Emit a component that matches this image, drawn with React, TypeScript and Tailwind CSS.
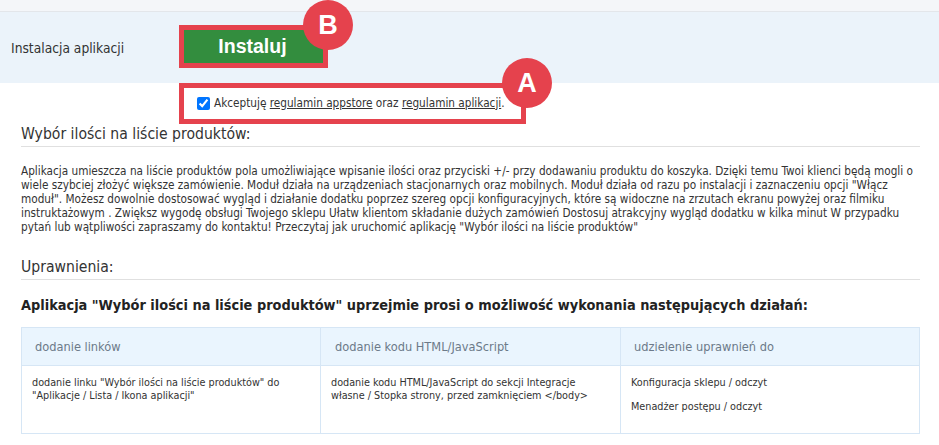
import React from "react";

const bodyFont = "font-['DejaVu_Sans',sans-serif] font-stretch-condensed";

const Badge = ({ letter, className }: { letter: string; className: string }) => (
  <div
    className={`absolute flex h-[50px] w-[50px] items-center justify-center rounded-full bg-[#e5424d] font-['Liberation_Sans',sans-serif] text-[27px] font-bold text-white ${className}`}
  >
    {letter}
  </div>
);

const App = () => {
  return (
    <div className={`h-[445px] w-[939px] overflow-hidden bg-white text-[#333] ${bodyFont}`}>
      <div className="h-[12px] border-b border-[#e3e6ea] bg-[#f4f6f9]" />

      {/* Install band */}
      <div className="flex h-[71px] items-center bg-[#ebf3fa] pl-[11px]">
        <span className="mt-[1px] w-[168px] text-[13.7px]">Instalacja aplikacji</span>
        <div className="relative mb-[2px] flex h-[43px] w-[149px] items-center justify-center border-[5px] border-[#e5424d] bg-[#338d3e] font-['Liberation_Sans',sans-serif] text-[19.5px] font-bold text-white">
          <span className="mr-[2px]">Instaluj</span>
          <Badge letter="B" className="-right-[30px] -top-[30px]" />
        </div>
      </div>

      {/* Terms */}
      <div className="relative ml-[179px] flex h-[41px] w-[347px] items-center border-[5px] border-[#e5424d] pl-[13px] text-[11.7px]">
        <input type="checkbox" checked readOnly className="m-0 h-[13px] w-[13px] accent-[#0075ff]" />
        <span className="ml-[4px]">
          Akceptuję <u>regulamin appstore</u> oraz <u>regulamin aplikacji</u>.
        </span>
        <Badge letter="A" className="-right-[31px] -top-[30px]" />
      </div>

      <div className="px-[21px] pr-[19px]">
        <h2 className="mt-[1px] h-[22px] border-b border-[#e0e0e0] text-[15.6px] leading-[18px]">
          Wybór ilości na liście produktów:
        </h2>
        <p className="mt-[17px] whitespace-nowrap text-[11.7px] leading-[14px]">
          Aplikacja umieszcza na liście produktów pola umożliwiające wpisanie ilości oraz przyciski +/- przy dodawaniu produktu do koszyka. Dzięki temu Twoi klienci będą mogli o
          <br />
          wiele szybciej złożyć większe zamówienie. Moduł działa na urządzeniach stacjonarnych oraz mobilnych. Moduł działa od razu po instalacji i zaznaczeniu opcji "Włącz
          <br />
          moduł". Możesz dowolnie dostosować wygląd i działanie dodatku poprzez szereg opcji konfiguracyjnych, które są widoczne na zrzutach ekranu powyżej oraz filmiku
          <br />
          instruktażowym . Zwiększ wygodę obsługi Twojego sklepu Ułatw klientom składanie dużych zamówień Dostosuj atrakcyjny wygląd dodatku w kilka minut W przypadku
          <br />
          pytań lub wątpliwości zapraszamy do kontaktu! Przeczytaj jak uruchomić aplikację "Wybór ilości na liście produktów"
        </p>
        <h2 className="mt-[24px] h-[22px] border-b border-[#e0e0e0] text-[15.6px] leading-[18px]">Uprawnienia:</h2>
        <h3 className="mt-[16px] whitespace-nowrap text-[14.4px] font-bold leading-[18px] text-[#222]">
          Aplikacja "Wybór ilości na liście produktów" uprzejmie prosi o możliwość wykonania następujących działań:
        </h3>

        <table className="mt-[13px] w-full table-fixed border-collapse border border-[#d6e6f5]">
          <thead>
            <tr className="h-[38px] bg-[#eaf5fe] text-left text-[12.7px] text-[#6c7a89]">
              <th className="w-[299px] border border-[#d6e6f5] pl-[13px] font-normal">dodanie linków</th>
              <th className="w-[300px] border border-[#d6e6f5] pl-[14px] font-normal">dodanie kodu HTML/JavaScript</th>
              <th className="border border-[#d6e6f5] pl-[13px] font-normal">udzielenie uprawnień do</th>
            </tr>
          </thead>
          <tbody>
            <tr className="h-[68px] align-top text-[10.75px] leading-[13px]">
              <td className="border border-[#d6e6f5] pl-[10px] pr-[8px] pt-[10px]">
                dodanie linku "Wybór ilości na liście produktów" do
                <br />
                "Aplikacje / Lista / Ikona aplikacji"
              </td>
              <td className="border border-[#d6e6f5] pl-[10px] pr-[8px] pt-[10px]">
                dodanie kodu HTML/JavaScript do sekcji Integracje
                <br />
                własne / Stopka strony, przed zamknięciem &lt;/body&gt;
              </td>
              <td className="border border-[#d6e6f5] pl-[10px] pt-[10px]">
                <div>Konfiguracja sklepu / odczyt</div>
                <div className="mt-[11px]">Menadżer postępu / odczyt</div>
              </td>
            </tr>
          </tbody>
        </table>
      </div>
    </div>
  );
};

export default App;
